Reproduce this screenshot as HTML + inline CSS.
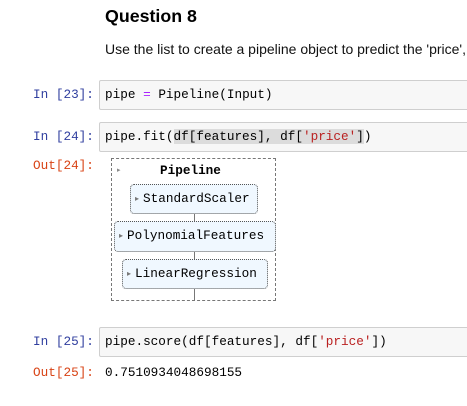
<!DOCTYPE html>
<html><head><style>
body{margin:0;width:467px;height:406px;background:#fff;position:relative;overflow:hidden;font-family:"Liberation Sans",sans-serif}
.a{position:absolute;white-space:pre}
.m{font-family:"Liberation Mono",monospace;font-size:12.7px}
.box{position:absolute;left:99px;width:400px;background:#f7f7f7;border:1px solid #cfcfcf;border-radius:2px}
.in{color:#303F9F}.out{color:#D84315}
.st{position:absolute;background:#f0f8ff;border:1px dotted #555;border-radius:4px;box-sizing:border-box;font-family:"Liberation Mono",monospace;font-size:12.7px;color:#000;line-height:28px;padding-left:4px}
.tr{font-size:8px;color:#777;margin-right:4px;vertical-align:1px}
</style></head><body>
<div class="a" style="left:105px;top:6px;font-size:17.8px;font-weight:bold">Question 8</div>
<div class="a" style="left:105px;top:41px;font-size:14px;color:#111">Use the list to create a pipeline object to predict the 'price', </div>

<div class="a m in" style="left:33px;top:87px">In [23]:</div>
<div class="box" style="top:80px;height:28px"></div>
<div class="a m" style="left:105px;top:87px">pipe <span style="color:#aa22ff">=</span> Pipeline(Input)</div>

<div class="a m in" style="left:33px;top:129px">In [24]:</div>
<div class="box" style="top:122px;height:28px"></div>
<div class="a m" style="left:105px;top:129px">pipe.fit(<span style="background:#dcdcdc">df[features], df[<span style="color:#BA2121">'price'</span>]</span>)</div>

<div class="a m out" style="left:33px;top:158px">Out[24]:</div>
<div style="position:absolute;left:111px;top:158px;width:165px;height:143px;border:1px dashed #777;box-sizing:border-box"></div>
<div class="a" style="left:117px;top:166px;font-size:7px;color:#888">▸</div>
<div class="a m" style="left:160px;top:163px;font-weight:bold">Pipeline</div>
<div style="position:absolute;left:194px;top:213px;width:1px;height:88px;background:#777"></div>
<div class="st" style="left:130px;top:184px;width:128px;height:30px"><span class="tr">▸</span>StandardScaler</div>
<div class="st" style="left:114px;top:221px;width:162px;height:31px"><span class="tr">▸</span>PolynomialFeatures</div>
<div class="st" style="left:122px;top:259px;width:146px;height:30px"><span class="tr">▸</span>LinearRegression</div>

<div class="a m in" style="left:33px;top:334px">In [25]:</div>
<div class="box" style="top:327px;height:28px"></div>
<div class="a m" style="left:105px;top:334px">pipe.score(df[features], df[<span style="color:#BA2121">'price'</span>])</div>
<div class="a m out" style="left:33px;top:365px">Out[25]:</div>
<div class="a m" style="left:105px;top:365px">0.7510934048698155</div>
</body></html>
